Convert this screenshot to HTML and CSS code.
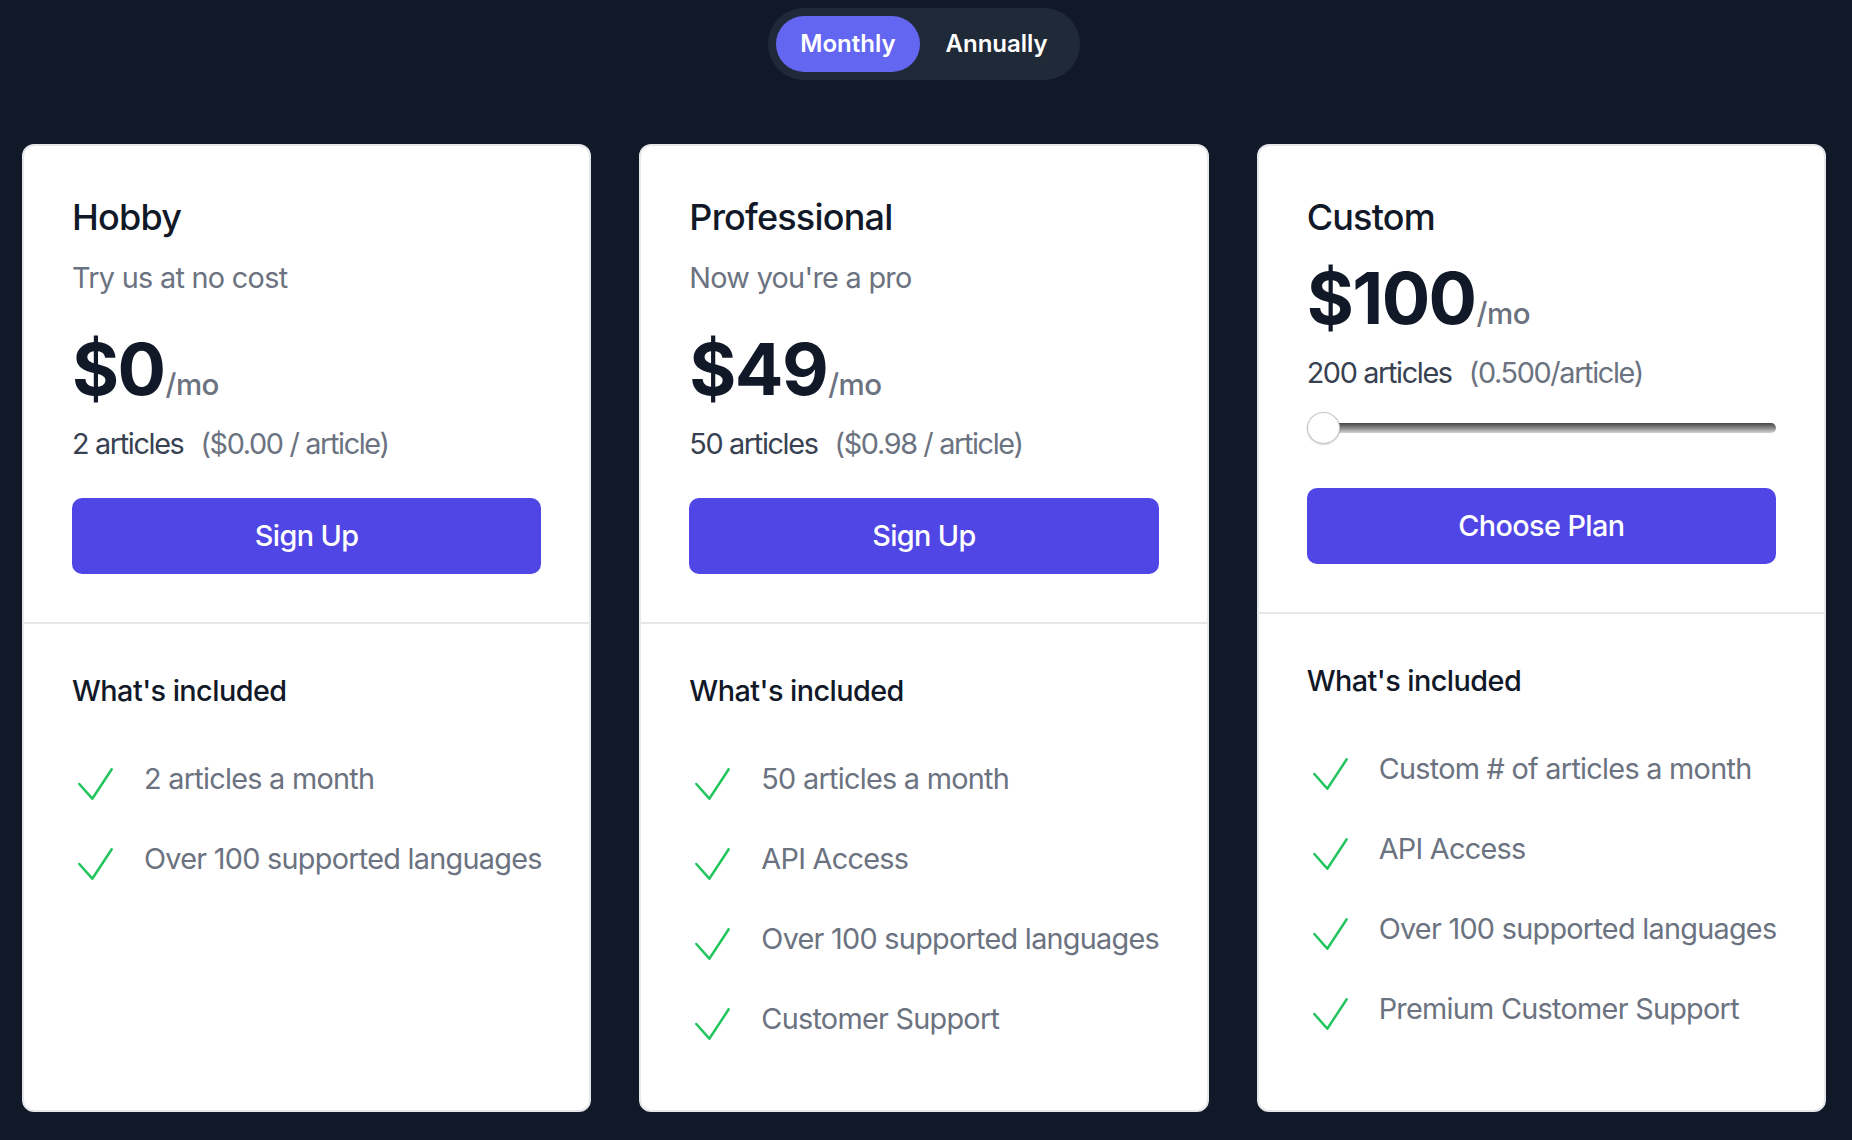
FILE: index.html
```html
<!DOCTYPE html>
<html lang="en">
<head>
<meta charset="utf-8">
<title>Pricing</title>
<link rel="stylesheet" href="styles.css">
</head>
<body>
<div class="page">
  <div class="toggle-row">
    <div class="toggle">
      <button class="toggle-btn active">Monthly</button>
      <button class="toggle-btn">Annually</button>
    </div>
  </div>

  <div class="plans">
    <div class="card">
      <div class="card-top">
        <h2 class="title">Hobby</h2>
        <p class="subtitle">Try us at no cost</p>
        <div class="price"><span class="amount">$0</span><span class="unit">/mo</span></div>
        <p class="articles"><span class="count">2 articles</span><span class="per">($0.00 / article)</span></p>
        <button class="cta">Sign Up</button>
      </div>
      <div class="features">
        <h3 class="features-title">What's included</h3>
        <ul class="feature-list">
          <li class="feature"><svg class="check" width="36" height="34" viewBox="0 0 36 34"><path d="M2.3 17 L15.3 31.7 L34.7 2.3"/></svg><span>2 articles a month</span></li>
          <li class="feature"><svg class="check" width="36" height="34" viewBox="0 0 36 34"><path d="M2.3 17 L15.3 31.7 L34.7 2.3"/></svg><span>Over 100 supported languages</span></li>
        </ul>
      </div>
    </div>

    <div class="card">
      <div class="card-top">
        <h2 class="title">Professional</h2>
        <p class="subtitle">Now you're a pro</p>
        <div class="price"><span class="amount">$49</span><span class="unit">/mo</span></div>
        <p class="articles"><span class="count">50 articles</span><span class="per">($0.98 / article)</span></p>
        <button class="cta">Sign Up</button>
      </div>
      <div class="features">
        <h3 class="features-title">What's included</h3>
        <ul class="feature-list">
          <li class="feature"><svg class="check" width="36" height="34" viewBox="0 0 36 34"><path d="M2.3 17 L15.3 31.7 L34.7 2.3"/></svg><span>50 articles a month</span></li>
          <li class="feature"><svg class="check" width="36" height="34" viewBox="0 0 36 34"><path d="M2.3 17 L15.3 31.7 L34.7 2.3"/></svg><span>API Access</span></li>
          <li class="feature"><svg class="check" width="36" height="34" viewBox="0 0 36 34"><path d="M2.3 17 L15.3 31.7 L34.7 2.3"/></svg><span>Over 100 supported languages</span></li>
          <li class="feature"><svg class="check" width="36" height="34" viewBox="0 0 36 34"><path d="M2.3 17 L15.3 31.7 L34.7 2.3"/></svg><span>Customer Support</span></li>
        </ul>
      </div>
    </div>

    <div class="card">
      <div class="card-top">
        <h2 class="title">Custom</h2>
        <div class="price price-custom"><span class="amount">$100</span><span class="unit">/mo</span></div>
        <p class="articles"><span class="count">200 articles</span><span class="per">(0.500/article)</span></p>
        <input class="slider" type="range" min="200" max="2000" value="200">
        <button class="cta cta-custom">Choose Plan</button>
      </div>
      <div class="features">
        <h3 class="features-title">What's included</h3>
        <ul class="feature-list">
          <li class="feature"><svg class="check" width="36" height="34" viewBox="0 0 36 34"><path d="M2.3 17 L15.3 31.7 L34.7 2.3"/></svg><span>Custom # of articles a month</span></li>
          <li class="feature"><svg class="check" width="36" height="34" viewBox="0 0 36 34"><path d="M2.3 17 L15.3 31.7 L34.7 2.3"/></svg><span>API Access</span></li>
          <li class="feature"><svg class="check" width="36" height="34" viewBox="0 0 36 34"><path d="M2.3 17 L15.3 31.7 L34.7 2.3"/></svg><span>Over 100 supported languages</span></li>
          <li class="feature"><svg class="check" width="36" height="34" viewBox="0 0 36 34"><path d="M2.3 17 L15.3 31.7 L34.7 2.3"/></svg><span>Premium Customer Support</span></li>
        </ul>
      </div>
    </div>
  </div>
</div>
</body>
</html>
```

FILE: styles.css
```css
* { box-sizing: border-box; }

html, body {
  margin: 0;
  padding: 0;
  background: #111827;
}

body {
  font-family: Inter, "Noto Sans", "Liberation Sans", sans-serif;
  color: #111827;
  width: 1852px;
  height: 1140px;
  overflow: hidden;
}

.page {
  padding: 8px 26px 0 22px;
}

.toggle-row {
  display: flex;
  justify-content: center;
}

.toggle {
  display: flex;
  gap: 2px;
  padding: 8px;
  border-radius: 9999px;
  background: #1f2937;
}

.toggle-btn {
  border: 0;
  margin: 0;
  padding: 12px 24px;
  border-radius: 9999px;
  background: transparent;
  color: #ffffff;
  font-family: inherit;
  font-size: 24px;
  line-height: 32px;
  font-weight: 600;
}

.toggle-btn.active {
  background: #6366f1;
}

.plans {
  margin-top: 64px;
  display: grid;
  grid-template-columns: repeat(3, minmax(0, 1fr));
  gap: 48px;
}

.card {
  background: #ffffff;
  border: 2px solid #e5e7eb;
  border-radius: 12px;
  display: flex;
  flex-direction: column;
  min-width: 0;
}

.card-top {
  padding: 49px 48px 48px;
  display: flex;
  flex-direction: column;
}

.title {
  margin: 0;
  font-size: 36px;
  line-height: 44px;
  font-weight: 500;
  letter-spacing: -0.8px;
  color: #111827;
}

.subtitle {
  margin: 20px 0 0;
  font-size: 28.8px;
  line-height: 38px;
  letter-spacing: -0.7px;
  color: #6b7280;
}

.price {
  margin-top: 36px;
  display: flex;
  align-items: baseline;
}

.price-custom {
  margin-top: 23px;
}

.amount {
  font-size: 72px;
  line-height: 72px;
  font-weight: 700;
  color: #111827;
  letter-spacing: -1.6px;
}

.unit {
  margin-left: 1px;
  font-size: 29.5px;
  line-height: 38px;
  font-weight: 500;
  letter-spacing: -0.5px;
  color: #6b7280;
}

.articles {
  margin: 20px 0 0;
  font-size: 28.8px;
  line-height: 38px;
  letter-spacing: -1.35px;
}

.count {
  color: #374151;
}

.per {
  margin-left: 17px;
  color: #6b7280;
}

.slider {
  -webkit-appearance: none;
  appearance: none;
  display: block;
  width: 100%;
  height: 32px;
  margin: 20px 0 0;
  padding: 0;
  background: transparent;
}

.slider::-webkit-slider-runnable-track {
  height: 10px;
  border-radius: 5px;
  background: linear-gradient(#454545, #8f8f8f 55%, #d4d4d4);
}

.slider::-webkit-slider-thumb {
  -webkit-appearance: none;
  appearance: none;
  width: 33px;
  height: 32px;
  margin-top: -11px;
  border-radius: 50%;
  background: #ffffff;
  border: 1px solid #c4c4c4;
  box-shadow: 0 1px 2px rgba(0, 0, 0, 0.15);
}

.cta {
  margin-top: 35px;
  border: 0;
  padding: 19px 0;
  border-radius: 10px;
  background: #4f46e5;
  color: #ffffff;
  font-family: inherit;
  font-size: 28.8px;
  line-height: 38px;
  font-weight: 500;
  letter-spacing: -0.6px;
  width: 100%;
}

.cta-custom {
  margin-top: 44px;
}

.features {
  flex: 1;
  border-top: 2px solid #e5e7eb;
  padding: 48px 48px 72px;
}

.features-title {
  margin: 0;
  font-size: 28.8px;
  line-height: 38px;
  font-weight: 500;
  letter-spacing: -0.55px;
  color: #111827;
}

.feature-list {
  list-style: none;
  margin: 50px 0 0;
  padding: 0;
  display: flex;
  flex-direction: column;
  gap: 42px;
}

.feature {
  display: flex;
  align-items: flex-start;
  height: 38px;
  font-size: 28.8px;
  line-height: 38px;
  letter-spacing: -0.72px;
  color: #6b7280;
}

.check {
  flex-shrink: 0;
  margin: 7px 0 0 5px;
  overflow: visible;
}

.check path {
  fill: none;
  stroke: #22c55e;
  stroke-width: 2.5;
  stroke-linecap: round;
  stroke-linejoin: round;
}

.feature span {
  margin-left: 31px;
  white-space: nowrap;
}
```
